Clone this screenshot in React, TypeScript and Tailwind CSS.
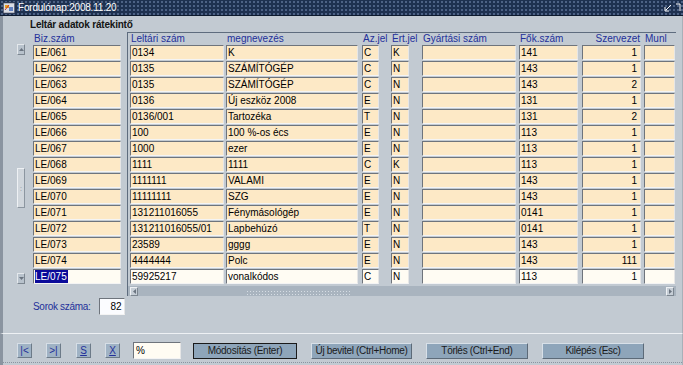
import React from 'react'

type Row = {
  biz: string
  leltari: string
  nev: string
  az: string
  ert: string
  gyart: string
  fok: string
  szerv: string
  munl: string
}

const rows: Row[] = [
  { biz: 'LE/061', leltari: '0134', nev: 'K', az: 'C', ert: 'K', gyart: '', fok: '141', szerv: '1', munl: '' },
  { biz: 'LE/062', leltari: '0135', nev: 'SZÁMÍTÓGÉP', az: 'C', ert: 'N', gyart: '', fok: '143', szerv: '1', munl: '' },
  { biz: 'LE/063', leltari: '0135', nev: 'SZÁMÍTÓGÉP', az: 'C', ert: 'N', gyart: '', fok: '143', szerv: '2', munl: '' },
  { biz: 'LE/064', leltari: '0136', nev: 'Új eszköz 2008', az: 'E', ert: 'N', gyart: '', fok: '131', szerv: '1', munl: '' },
  { biz: 'LE/065', leltari: '0136/001', nev: 'Tartozéka', az: 'T', ert: 'N', gyart: '', fok: '131', szerv: '2', munl: '' },
  { biz: 'LE/066', leltari: '100', nev: '100 %-os écs', az: 'E', ert: 'N', gyart: '', fok: '113', szerv: '1', munl: '' },
  { biz: 'LE/067', leltari: '1000', nev: 'ezer', az: 'E', ert: 'N', gyart: '', fok: '113', szerv: '1', munl: '' },
  { biz: 'LE/068', leltari: '1111', nev: '1111', az: 'C', ert: 'K', gyart: '', fok: '113', szerv: '1', munl: '' },
  { biz: 'LE/069', leltari: '1111111', nev: 'VALAMI', az: 'E', ert: 'N', gyart: '', fok: '143', szerv: '1', munl: '' },
  { biz: 'LE/070', leltari: '11111111', nev: 'SZG', az: 'E', ert: 'N', gyart: '', fok: '143', szerv: '1', munl: '' },
  { biz: 'LE/071', leltari: '131211016055', nev: 'Fénymásológép', az: 'E', ert: 'N', gyart: '', fok: '0141', szerv: '1', munl: '' },
  { biz: 'LE/072', leltari: '131211016055/01', nev: 'Lapbehúzó', az: 'T', ert: 'N', gyart: '', fok: '0141', szerv: '1', munl: '' },
  { biz: 'LE/073', leltari: '23589', nev: 'gggg', az: 'E', ert: 'N', gyart: '', fok: '143', szerv: '1', munl: '' },
  { biz: 'LE/074', leltari: '4444444', nev: 'Polc', az: 'E', ert: 'N', gyart: '', fok: '143', szerv: '111', munl: '' },
  { biz: 'LE/075', leltari: '59925217', nev: 'vonalkódos', az: 'C', ert: 'N', gyart: '', fok: '113', szerv: '1', munl: '' },
]

// column widths / offsets inside the scrolling block
const cols: { key: keyof Row; label: string; cls: string; right?: boolean }[] = [
  { key: 'leltari', label: 'Leltári szám', cls: 'ml-[2px] w-[94px]' },
  { key: 'nev', label: 'megnevezés', cls: 'ml-[2px] w-[132px]' },
  { key: 'az', label: 'Az.jel', cls: 'ml-[4px] w-[17px]' },
  { key: 'ert', label: 'Ért.jel', cls: 'ml-[12px] w-[18px]' },
  { key: 'gyart', label: 'Gyártási szám', cls: 'ml-[13px] w-[94px]' },
  { key: 'fok', label: 'Fők.szám', cls: 'ml-[3px] w-[59px]' },
  { key: 'szerv', label: 'Szervezet', cls: 'ml-[4px] w-[59px]', right: true },
  { key: 'munl', label: 'Munl', cls: 'ml-[3px] w-[31px]' },
]

function Field({ value, last, right, cls, selected }: { value: string; last?: boolean; right?: boolean; cls: string; selected?: boolean }) {
  return (
    <div
      className={
        (last ? 'bg-[#fffcf3] ' : 'bg-[#fde9c6] ') +
        (right ? 'justify-end pr-[3px] ' : 'pl-[1px] ') +
        'h-[15px] mb-[1px] flex items-center shrink-0 overflow-hidden whitespace-nowrap border-t border-l border-t-[#6e747c] border-l-[#6e747c] border-b border-r border-b-[#f4f4f4] border-r-[#e6e6e6] text-[10px] leading-[13px] text-black ' +
        cls
      }
    >
      {selected ? <span className="bg-[#0b0b9a] text-white h-[13px] flex items-center pr-[1px]">{value}</span> : value}
    </div>
  )
}

function ArrowBtn({ dir }: { dir: 'up' | 'down' }) {
  return (
    <div className="w-[8px] h-[11px] bg-[#b8c2cc] border border-[#e4e8ec] border-b-[#7c8690] border-r-[#7c8690] flex items-center justify-center">
      <svg width="5" height="3" viewBox="0 0 5 3">
        {dir === 'up' ? <path d="M0 3 L2.5 0 L5 3 Z" fill="#6a7480" /> : <path d="M0 0 L2.5 3 L5 0 Z" fill="#6a7480" />}
      </svg>
    </div>
  )
}

const smallBtn =
  'w-[15px] h-[15px] bg-[#9fb2c4] border border-[#d6dee6] border-b-[#6c7a88] border-r-[#6c7a88] flex items-center justify-center text-[10px] text-[#23309a] leading-none'
const bigBtn =
  'h-[16px] bg-[#8ea5ba] border border-[#d8e0e8] border-b-[#5c6a78] border-r-[#5c6a78] flex items-center justify-center whitespace-nowrap text-[10px] tracking-[-0.3px] text-[#1a1a1a]'

export default function App() {
  return (
    <div className="w-[683px] h-[365px] overflow-hidden bg-[#c2cad2] flex flex-col font-['Liberation_Sans',Arial,sans-serif] text-[10px]">
      {/* title bar */}
      <div className="h-[16px] shrink-0 flex items-center bg-[#1e3150] bg-[radial-gradient(circle,#4d6285_0.8px,transparent_1px)] bg-[length:4px_4px] border-b border-[#0d1a2e]">
        <div className="ml-[3px] w-[12px] h-[12px] bg-[#1e3150] flex items-center justify-center">
          <svg width="12" height="12" viewBox="0 0 12 12">
            <rect x="0.5" y="1" width="11" height="10" fill="#d8dce4" stroke="#556" strokeWidth="0.6" />
            <rect x="2" y="3" width="4" height="3" fill="#e8a020" />
            <rect x="6" y="5" width="4" height="4" fill="#6080c0" />
            <path d="M2 8 L6 3" stroke="#c03030" strokeWidth="1" />
          </svg>
        </div>
        <span className="ml-[3px] text-white text-[10px] tracking-[-0.2px] leading-none">Fordulónap:2008.11.20</span>
        <div className="ml-auto mr-[2px] flex items-center gap-[3px]">
          <svg width="8" height="8" viewBox="0 0 8 8">
            <path d="M7 1 L2 6 M1 3 L1 7 L5 7" stroke="#ffffff" strokeWidth="1" fill="none" />
          </svg>
          <svg width="6" height="9" viewBox="0 0 6 9">
            <path d="M1 1 L5 1 L5 8" stroke="#ffffff" strokeWidth="1" fill="none" />
          </svg>
        </div>
      </div>

      {/* content canvas */}
      <div className="h-[318px] shrink-0 border-l-[3px] border-[#8a94a0] border-r border-r-[#a8b0b8] border-b border-b-[#eef1f4] flex flex-col">
        <div className="h-[16px] pl-[27px] flex items-center font-bold text-[#141414] text-[10px] tracking-[-0.2px]">Leltár adatok rátekintő</div>

        <div className="flex">
          {/* left: vertical scroll + biz column */}
          <div className="flex">
            <div className="ml-[14px] w-[8px] pt-[12px] flex flex-col items-center">
              <ArrowBtn dir="up" />
              <div className="h-[113px]" />
              <div className="w-[8px] h-[40px] bg-[#d0d6dc] border border-[#eef1f4] border-b-[#8c96a0] border-r-[#8c96a0] flex items-center justify-center">
                <span className="text-[7px] text-[#7c8690] leading-none">:</span>
              </div>
              <div className="h-[65px]" />
              <ArrowBtn dir="down" />
            </div>
            <div className="ml-[8px] flex flex-col">
              <div className="h-[13px] pl-[1px] text-[#23309a] text-[10px] leading-[13px]">Biz.szám</div>
              {rows.map((r, i) => (
                <Field key={r.biz} value={r.biz} last={i === rows.length - 1} selected={i === rows.length - 1} cls="w-[88px]" />
              ))}
            </div>
          </div>

          {/* right: scrolling block */}
          <div className="ml-[6px] w-[549px] border-t border-l border-[#5e6c7e] flex flex-col">
            <div className="h-[12px] flex">
              {cols.map((c) => (
                <div
                  key={c.key}
                  className={(c.right ? 'text-right pr-[1px] ' : 'pl-[1px] ') + 'shrink-0 overflow-visible whitespace-nowrap text-[#23309a] text-[10px] leading-[12px] ' + c.cls}
                >
                  {c.label}
                </div>
              ))}
            </div>
            {rows.map((r, i) => (
              <div key={r.biz} className="flex">
                {cols.map((c) => (
                  <Field key={c.key} value={r[c.key]} right={c.right} last={i === rows.length - 1} cls={c.cls} />
                ))}
              </div>
            ))}
            {/* horizontal scrollbar */}
            <div className="mt-[1px] h-[10px] bg-[#a9b4bf] flex items-center px-[2px]">
              <div className="w-[8px] h-[9px] bg-[#c6ced6] border border-[#eef1f4] border-b-[#7c8690] border-r-[#7c8690] flex items-center justify-center">
                <svg width="3" height="5" viewBox="0 0 3 5"><path d="M3 0 L0 2.5 L3 5 Z" fill="#6a7480" /></svg>
              </div>
              <div className="ml-[108px] w-[104px] h-[6px] mt-[3px] bg-[#a9b4bf] bg-[radial-gradient(circle,#d6dde4_0.8px,transparent_1px)] bg-[length:3px_3px]" />
              <div className="ml-auto w-[8px] h-[9px] bg-[#c6ced6] border border-[#eef1f4] border-b-[#7c8690] border-r-[#7c8690] flex items-center justify-center">
                <svg width="3" height="5" viewBox="0 0 3 5"><path d="M0 0 L3 2.5 L0 5 Z" fill="#6a7480" /></svg>
              </div>
            </div>
          </div>
        </div>

        <div className="mt-[2px] ml-[30px] flex items-center">
          <span className="text-[#23309a] text-[10px] tracking-[-0.3px]">Sorok száma:</span>
          <div className="ml-[8px] w-[26px] h-[17px] bg-[#fbfcff] border-t border-l border-[#6e747c] border-b border-r border-b-[#f4f4f4] border-r-[#e6e6e6] flex items-center justify-end pr-[2px] text-[10px] text-black">82</div>
        </div>
      </div>

      {/* button bar */}
      <div className="flex-1 border-l-[3px] border-[#8a94a0] border-r border-r-[#a8b0b8] relative">
        <div className="mt-[8px] flex items-center h-[17px]">
          <div className={'ml-[14px] ' + smallBtn}>|&lt;</div>
          <div className={'ml-[14px] ' + smallBtn}>&gt;|</div>
          <div className={'ml-[15px] underline ' + smallBtn}>S</div>
          <div className={'ml-[14px] underline ' + smallBtn}>X</div>
          <div className="ml-[13px] w-[48px] h-[17px] bg-[#fffcf3] border-t border-l border-[#6e747c] border-b border-r border-b-[#f4f4f4] border-r-[#e6e6e6] flex items-center pl-[2px] text-[10px] text-black">%</div>
          <div className="ml-[12px] w-[104px] h-[16px] bg-[#8ea5ba] border border-[#1a1a1a] flex items-center justify-center whitespace-nowrap text-[10px] tracking-[-0.3px] text-[#1a1a1a]">Módosítás (Enter)</div>
          <div className={'ml-[14px] w-[101px] ' + bigBtn}>Új bevitel (Ctrl+Home)</div>
          <div className={'ml-[14px] w-[102px] ' + bigBtn}>Törlés (Ctrl+End)</div>
          <div className={'ml-[14px] w-[102px] ' + bigBtn}>Kilépés (Esc)</div>
        </div>
        <div className="absolute left-0 right-0 bottom-[2px] border-b border-dotted border-[#8a94a0]" />
      </div>
    </div>
  )
}
